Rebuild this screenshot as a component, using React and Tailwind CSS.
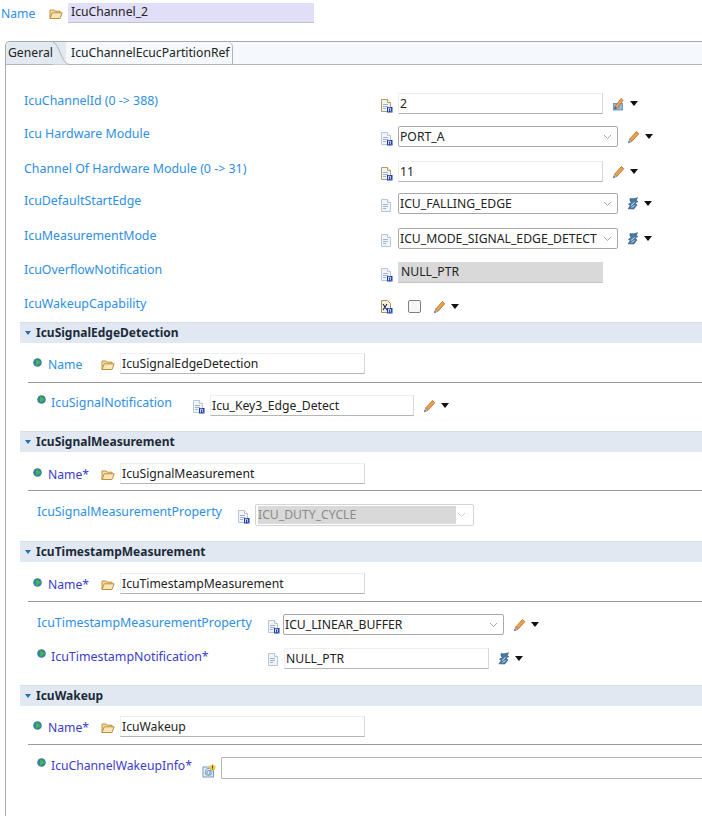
const BLUE = "text-[#2e8fe3]";
const PURPLE = "text-[#3b3bd0]";

function FileIcon({ variant = "r", className = "" }) {
  const edge = variant === "n" ? "#b79c62" : "#b9c6d8";
  return (
    <svg width="13" height="15" viewBox="0 0 13 15" className={`shrink-0 ${className}`}>
      <path d="M1.5 1.5h6l3 3v9h-9z" fill="#f1f4f8" stroke={edge} />
      <path d="M7.5 1.5v3h3" fill="#fff" stroke={edge} />
      <path d="M3 6.5h5M3 8.5h5M3 10.5h3" stroke="#9db3d0" strokeWidth="1" />
      {variant !== "plain" && <rect x="7" y="9" width="5.5" height="5.5" fill="#1f3fa8" />}
      {variant !== "plain" && <path d="M8.5 13.5v-3.4h1.6l.9 1-.9 1 1 1.4" stroke="#fff" strokeWidth=".8" fill="none" />}
    </svg>
  );
}

function XFileIcon({ className = "" }) {
  return (
    <svg width="13" height="15" viewBox="0 0 13 15" className={`shrink-0 ${className}`}>
      <path d="M1.5 1.5h6l3 3v9h-9z" fill="#f4f1e2" stroke="#a99457" />
      <path d="M3 5l4 6M7 5l-4 6" stroke="#27305f" strokeWidth="1.2" />
      <rect x="7" y="9" width="5.5" height="5.5" fill="#1f3fa8" />
      <path d="M8.5 13.5v-3.4h1.6l.9 1-.9 1 1 1.4" stroke="#fff" strokeWidth=".8" fill="none" />
    </svg>
  );
}

function Folder({ className = "" }) {
  return (
    <svg width="14" height="12" viewBox="0 0 14 12" className={`shrink-0 ${className}`}>
      <path d="M1 10.5V2h4l1 1.2h5v1.6" fill="#f3dfae" stroke="#c08f3a" />
      <path d="M1 10.5l2.2-5.7h10l-2.2 5.7z" fill="#f8e6b8" stroke="#c08f3a" />
    </svg>
  );
}

function Pencil({ className = "" }) {
  return (
    <svg width="13" height="14" viewBox="0 0 13 14" className={`shrink-0 ${className}`}>
      <path d="M2.6 9.2L9.4 1.6l2.4 2.1-6.9 7.7z" fill="#eda24f" stroke="#b26a22" strokeWidth=".8" />
      <path d="M2.6 9.2L1.3 12.8l3.6-1.4z" fill="#ecd9b6" stroke="#7d7a80" strokeWidth=".7" />
      <path d="M1.3 12.8l.6-1.7 1.1 1z" fill="#2c4f9c" />
    </svg>
  );
}

function PencilCalc({ className = "" }) {
  return (
    <svg width="13" height="14" viewBox="0 0 13 14" className={`shrink-0 ${className}`}>
      <rect x="1.5" y="6.5" width="9" height="6.5" fill="#8fb8dc" stroke="#5e88ad" strokeWidth=".8" />
      <path d="M3 9.5L9 1.5l2.2 1.8-6 8z" fill="#e9a25a" stroke="#a9692a" strokeWidth=".7" />
      <path d="M3 9.5L2 12.5l3-1.2z" fill="#35568f" />
    </svg>
  );
}

function Wand({ className = "" }) {
  return (
    <svg width="12" height="13" viewBox="0 0 12 13" className={`shrink-0 ${className}`}>
      <path d="M3 1.5c2 .6 5 .2 7.5-.8L9.2 3.4 11 4.6 8 6l2 2-3.2 4L1 11.8l2.2-3L1.5 7l3-1.4L3 4.2z" fill="#4a7aa6" stroke="#28507a" strokeWidth=".6" />
      <path d="M4 8.5l3.5-3M4.5 10.5l3-2" stroke="#e7eef6" strokeWidth=".9" />
    </svg>
  );
}

function Caret({ className = "" }) {
  return (
    <svg width="8" height="5" viewBox="0 0 8 5" className={`shrink-0 ${className}`}>
      <path d="M0 0h8L4 5z" fill="#111" />
    </svg>
  );
}

function Chevron({ color = "#a8a8a8" }) {
  return (
    <svg width="9" height="6" viewBox="0 0 9 6" className="shrink-0">
      <path d="M1 1l3.5 3.5L8 1" fill="none" stroke={color} strokeWidth="1" />
    </svg>
  );
}

function Dot({ className = "" }) {
  return (
    <svg width="9" height="9" viewBox="0 0 9 9" className={`shrink-0 ${className}`}>
      <circle cx="4.5" cy="4.5" r="4.3" fill="#3a7f9e" />
      <path d="M3 1.2l5.4 3.3L3 7.8z" fill="#43b84a" />
    </svg>
  );
}

function AtIcon({ className = "" }) {
  return (
    <svg width="14" height="14" viewBox="0 0 14 14" className={`shrink-0 ${className}`}>
      <rect x="1" y="3" width="10.5" height="10" fill="#e8eef4" stroke="#7b9ab8" />
      <text x="2.3" y="11.4" fontSize="8.5" fill="#2f6fa8" fontFamily="'Liberation Sans', sans-serif">@</text>
      <circle cx="10.5" cy="3.5" r="3" fill="#f2c94c" />
      <rect x="10" y="1.6" width="1" height="2.4" fill="#5c4300" />
      <rect x="10" y="4.5" width="1" height="1" fill="#5c4300" />
    </svg>
  );
}

function Input({ children, className = "" }) {
  return (
    <div className={`flex items-center shrink-0 bg-white pl-[1px] pt-[1px] h-[21px] border border-[#efefef] border-b-[#b5b5b5] border-r-[#d8d8d8] text-[12.2px] text-[#222] whitespace-nowrap ${className}`}>
      {children}
    </div>
  );
}

function Select({ children, className = "" }) {
  return (
    <div className={`flex items-center justify-between shrink-0 bg-white pl-[1px] pr-[5px] h-[21px] border border-[#a9a9a9] rounded-[2px] text-[12.2px] text-[#222] whitespace-nowrap ${className}`}>
      <span className="pt-[1px]">{children}</span>
      <Chevron />
    </div>
  );
}

function MainRow({ label, icon, children, className = "", labelClass = "-mt-[4px]" }) {
  return (
    <div className={`flex items-center h-[21px] ${className}`}>
      <span className={`w-[356px] shrink-0 text-[12.4px] ${labelClass} ${BLUE}`}>{label}</span>
      <span className="w-[18px] shrink-0 flex">{icon}</span>
      {children}
    </div>
  );
}

function Section({ title, className = "" }) {
  return (
    <div className={`flex items-center h-[21px] ml-[14px] pl-[5px] bg-[#e1e8f1] border-t border-[#d5dce6] ${className}`}>
      <svg width="6" height="4" viewBox="0 0 6 4" className="shrink-0">
        <path d="M0 0h6L3 4z" fill="#1c6fc0" />
      </svg>
      <span className="ml-[5px] text-[12px] font-bold text-[#1c2a3a]">{title}</span>
    </div>
  );
}

function NameRow({ value, label = "Name", color = BLUE, className = "" }) {
  return (
    <div className={`flex items-center h-[21px] pl-[27px] ${className}`}>
      <Dot className="-mt-[3px]" />
      <span className={`ml-[6px] w-[53px] shrink-0 text-[12.2px] mt-[4px] ${color}`}>{label}</span>
      <Folder className="mt-[2px]" />
      <Input className="ml-[5px] w-[245px]">{value}</Input>
    </div>
  );
}

function Rule({ className = "" }) {
  return <div className={`h-[1px] ml-[22px] bg-[#9a9a9a] ${className}`} />;
}

export default function App() {
  return (
    <div className="w-[702px] h-[816px] overflow-hidden bg-white font-['Noto_Sans',sans-serif] text-[12.2px]">
      <div className="flex items-center h-[21px] pt-[2px] box-content">
        <span className={`ml-[1px] w-[48px] text-[12.2px] mt-[4px] ${BLUE}`}>Name</span>
        <Folder className="mt-[2px]" />
        <div className="ml-[5px] w-[246px] h-[20px] flex items-center pl-[3px] pt-[1px] bg-[#e1dff8] border-b border-[#c2c2c2] text-[12.2px] text-[#222]">IcuChannel_2</div>
      </div>

      <div className="mt-[18px] ml-[5px] h-[775px] border-l border-t border-[#a9a9a9] rounded-tl-[5px]">
        <div className="flex h-[23px] border-b border-[#b4b4b4] bg-[#f5f9fd] rounded-tl-[5px]">
          <div className="relative w-[60px] flex items-center pl-[2px] bg-[#e3e9f0] rounded-tl-[5px] text-[12.2px] text-[#222]">
            <span className="relative z-10">General</span>
            <svg width="16" height="23" viewBox="0 0 16 23" className="absolute left-[47px] top-0">
              <path d="M0 0 C6 1 8 21 16 22.5 L0 22.5z" fill="#e3e9f0" />
              <path d="M0 0 C6 1 8 21 16 22.5" fill="none" stroke="#b4b4b4" />
            </svg>
          </div>
          <div className="flex items-center pl-[5px] pr-[2px] bg-[#f5f9fd] border-r border-[#b4b4b4] rounded-tr-[5px] text-[12.2px] text-[#222]">IcuChannelEcucPartitionRef</div>
        </div>

        <div className="pl-[18px] pt-[28px]">
          <MainRow label="IcuChannelId (0 -> 388)" icon={<FileIcon variant="n" className="mt-[3px]" />}>
            <Input className="w-[205px]">2</Input>
            <PencilCalc className="ml-[9px]" />
            <Caret className="ml-[5px]" />
          </MainRow>
          <MainRow label="Icu Hardware Module" icon={<FileIcon className="mt-[3px]" />} className="mt-[12px]">
            <Select className="w-[220px]">PORT_A</Select>
            <Pencil className="ml-[9px]" />
            <Caret className="ml-[5px]" />
          </MainRow>
          <MainRow label="Channel Of Hardware Module (0 -> 31)" labelClass="-mt-[4px]" icon={<FileIcon variant="n" className="mt-[3px]" />} className="mt-[14px]">
            <Input className="w-[205px]">11</Input>
            <Pencil className="ml-[9px]" />
            <Caret className="ml-[5px]" />
          </MainRow>
          <MainRow label="IcuDefaultStartEdge" icon={<FileIcon variant="plain" className="mt-[3px]" />} className="mt-[11px]">
            <Select className="w-[220px]">ICU_FALLING_EDGE</Select>
            <Wand className="ml-[9px]" />
            <Caret className="ml-[5px]" />
          </MainRow>
          <MainRow label="IcuMeasurementMode" labelClass="-mt-[4px]" icon={<FileIcon variant="plain" className="mt-[3px]" />} className="mt-[14px]">
            <Select className="w-[220px]">ICU_MODE_SIGNAL_EDGE_DETECT</Select>
            <Wand className="ml-[9px]" />
            <Caret className="ml-[5px]" />
          </MainRow>
          <MainRow label="IcuOverflowNotification" icon={<FileIcon className="mt-[3px]" />} className="mt-[13px]">
            <div className="flex items-center w-[205px] h-[21px] pl-[3px] pt-[1px] bg-[#d9d9d9] border-b border-[#c4c4c4] text-[12.2px] text-[#222]">NULL_PTR</div>
          </MainRow>
          <MainRow label="IcuWakeupCapability" labelClass="-mt-[5px]" icon={<XFileIcon />} className="mt-[13px]">
            <div className="ml-[10px] w-[13px] h-[13px] bg-[#f7f7f7] border border-[#808080] rounded-[2px] shrink-0" />
            <Pencil className="ml-[12px]" />
            <Caret className="ml-[5px]" />
          </MainRow>
        </div>

        <Section title="IcuSignalEdgeDetection" className="mt-[5px]" />
        <NameRow value="IcuSignalEdgeDetection" className="mt-[10px]" />
        <Rule className="mt-[8px]" />
        <div className="flex items-center h-[21px] mt-[12px] pl-[31px]">
          <Dot className="-mt-[13px]" />
          <span className={`ml-[5px] w-[141px] shrink-0 text-[12.4px] -mt-[5px] ${BLUE}`}>IcuSignalNotification</span>
          <FileIcon className="mt-[2px]" />
          <Input className="ml-[5px] w-[204px]">Icu_Key3_Edge_Detect</Input>
          <Pencil className="ml-[9px]" />
          <Caret className="ml-[5px]" />
        </div>

        <Section title="IcuSignalMeasurement" className="mt-[15px]" />
        <NameRow value="IcuSignalMeasurement" label="Name*" color={PURPLE} className="mt-[11px]" />
        <Rule className="mt-[6px]" />
        <div className="flex items-center h-[22px] mt-[13px] pl-[31px]">
          <span className={`w-[200px] shrink-0 text-[12.4px] -mt-[6px] ${BLUE}`}>IcuSignalMeasurementProperty</span>
          <FileIcon className="mt-[3px]" />
          <div className="ml-[5px] flex items-center justify-between w-[219px] h-[22px] border border-[#d4d4d4] rounded-[2px] px-[2px] pr-[7px] shrink-0">
            <span className="flex items-center w-[198px] h-[18px] bg-[#d9d9d9] text-[12.2px] text-[#8a8a8a]">ICU_DUTY_CYCLE</span>
            <Chevron color="#cfcfcf" />
          </div>
        </div>

        <Section title="IcuTimestampMeasurement" className="mt-[15px]" />
        <NameRow value="IcuTimestampMeasurement" label="Name*" color={PURPLE} className="mt-[11px]" />
        <Rule className="mt-[7px]" />
        <div className="flex items-center h-[21px] mt-[12px] pl-[31px]">
          <span className={`w-[230px] shrink-0 text-[12.4px] -mt-[3px] ${BLUE}`}>IcuTimestampMeasurementProperty</span>
          <FileIcon className="mt-[3px]" />
          <Select className="ml-[3px] w-[221px]">ICU_LINEAR_BUFFER</Select>
          <Pencil className="ml-[9px]" />
          <Caret className="ml-[5px]" />
        </div>
        <div className="flex items-center h-[21px] mt-[13px] pl-[31px]">
          <Dot className="-mt-[11px]" />
          <span className={`ml-[5px] w-[216px] shrink-0 text-[12.4px] -mt-[3px] ${PURPLE}`}>IcuTimestampNotification*</span>
          <FileIcon variant="plain" className="mt-[2px]" />
          <Input className="ml-[4px] w-[205px]">NULL_PTR</Input>
          <Wand className="ml-[9px]" />
          <Caret className="ml-[5px]" />
        </div>

        <Section title="IcuWakeup" className="mt-[16px]" />
        <NameRow value="IcuWakeup" label="Name*" color={PURPLE} className="mt-[10px]" />
        <Rule className="mt-[7px]" />
        <div className="flex items-center h-[22px] mt-[12px] pl-[31px]">
          <Dot className="-mt-[12px]" />
          <span className={`ml-[5px] w-[151px] shrink-0 text-[12.2px] -mt-[4px] ${PURPLE}`}>IcuChannelWakeupInfo*</span>
          <AtIcon className="mt-[5px]" />
          <div className="ml-[5px] flex-1 h-[22px] border border-[#b4b4b4] border-r-0 rounded-l-[2px] bg-white" />
        </div>
      </div>
    </div>
  );
}
